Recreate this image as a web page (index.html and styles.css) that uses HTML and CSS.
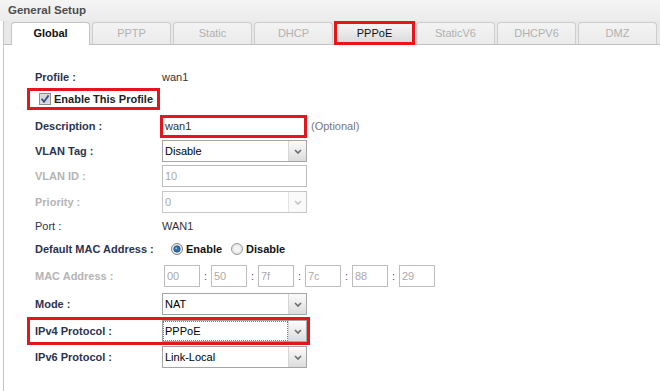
FILE: index.html
```html
<!DOCTYPE html>
<html lang="en">
<head>
  <meta charset="UTF-8">
  <title>General Setup</title>
  <link rel="stylesheet" href="styles.css">
</head>
<body>
  <div class="setup-title">General Setup</div>

  <div class="panel">
    <ul class="tabs">
      <li class="tab active">Global</li>
      <li class="tab">PPTP</li>
      <li class="tab">Static</li>
      <li class="tab">DHCP</li>
      <li class="tab hover marked">PPPoE</li>
      <li class="tab">StaticV6</li>
      <li class="tab">DHCPV6</li>
      <li class="tab">DMZ</li>
    </ul>

    <div class="form">
      <div class="row text">
        <span class="label">Profile :</span>
        <span class="value">wan1</span>
      </div>

      <div class="check-box">
        <svg width="12" height="12" viewBox="0 0 12 12">
          <rect x="0.5" y="0.5" width="11" height="11" fill="#e2e2e2" stroke="#8c8c8c"/>
          <rect x="1.5" y="1.5" width="9" height="9" fill="#d4d8de"/>
          <path d="M2.6 5.8 L5 8.8 L9.6 2.4" fill="none" stroke="#3d5282" stroke-width="1.8"/>
        </svg>
        <span>Enable This Profile</span>
      </div>

      <div class="row">
        <span class="label">Description :</span>
        <div class="input marked">wan1</div>
        <span class="optional">(Optional)</span>
      </div>

      <div class="row short">
        <span class="label">VLAN Tag :</span>
        <div class="select">
          <span class="choice">Disable</span>
          <span class="arrow"><svg width="8" height="5" viewBox="0 0 8 5"><path d="M1 1 L4 4 L7 1" fill="none" stroke="#6a6a6a" stroke-width="1.6"/></svg></span>
        </div>
      </div>

      <div class="row">
        <span class="label off">VLAN ID :</span>
        <div class="input off">10</div>
      </div>

      <div class="row">
        <span class="label off">Priority :</span>
        <div class="select off">
          <span class="choice">0</span>
          <span class="arrow"><svg width="8" height="5" viewBox="0 0 8 5"><path d="M1 1 L4 4 L7 1" fill="none" stroke="#c4c4c4" stroke-width="1.6"/></svg></span>
        </div>
      </div>

      <div class="row text">
        <span class="label plain">Port :</span>
        <span class="value">WAN1</span>
      </div>

      <div class="row short">
        <span class="label">Default MAC Address :</span>
        <div class="radios">
          <svg class="radio" width="12" height="12" viewBox="0 0 12 12">
            <circle cx="6" cy="6" r="5.5" fill="#ececec" stroke="#7f7f7f"/>
            <circle cx="6" cy="6" r="3.2" fill="#2d6fae" stroke="#1c4c7c" stroke-width="0.8"/>
            <circle cx="5.2" cy="5.2" r="1" fill="#9cc6ec"/>
          </svg>
          <span class="radio-text">Enable</span>
          <svg class="radio" width="12" height="12" viewBox="0 0 12 12">
            <circle cx="6" cy="6" r="5.5" fill="#e6e6e6" stroke="#9a9a9a"/>
            <circle cx="6" cy="6" r="3.5" fill="#f4f4f4"/>
          </svg>
          <span class="radio-text">Disable</span>
        </div>
      </div>

      <div class="row mac">
        <span class="label off">MAC Address :</span>
        <div class="mac-fields">
          <div class="input off">00</div><span class="colon">:</span>
          <div class="input off">50</div><span class="colon">:</span>
          <div class="input off">7f</div><span class="colon">:</span>
          <div class="input off">7c</div><span class="colon">:</span>
          <div class="input off">88</div><span class="colon">:</span>
          <div class="input off">29</div>
        </div>
      </div>

      <div class="row">
        <span class="label">Mode :</span>
        <div class="select">
          <span class="choice">NAT</span>
          <span class="arrow"><svg width="8" height="5" viewBox="0 0 8 5"><path d="M1 1 L4 4 L7 1" fill="none" stroke="#6a6a6a" stroke-width="1.6"/></svg></span>
        </div>
      </div>

      <div class="row marked">
        <span class="label">IPv4 Protocol :</span>
        <div class="select focus">
          <span class="choice">PPPoE</span>
          <span class="arrow"><svg width="8" height="5" viewBox="0 0 8 5"><path d="M1 1 L4 4 L7 1" fill="none" stroke="#6a6a6a" stroke-width="1.6"/></svg></span>
        </div>
      </div>

      <div class="row short">
        <span class="label">IPv6 Protocol :</span>
        <div class="select">
          <span class="choice">Link-Local</span>
          <span class="arrow"><svg width="8" height="5" viewBox="0 0 8 5"><path d="M1 1 L4 4 L7 1" fill="none" stroke="#6a6a6a" stroke-width="1.6"/></svg></span>
        </div>
      </div>
    </div>
  </div>
</body>
</html>
```

FILE: styles.css
```css
* {
  box-sizing: border-box;
}

body {
  margin: 0;
  font-family: "Liberation Sans", Arial, sans-serif;
  font-size: 11px;
  color: #333;
  background: #fff;
}

.setup-title {
  height: 21px;
  padding-left: 8px;
  line-height: 21px;
  font-size: 11.5px;
  font-weight: bold;
  color: #4d4d4d;
  background: linear-gradient(#f5f5f5, #ebebeb);
}

.panel {
  margin-left: 3px;
  border-left: 1px solid #c4c4c4;
  min-height: calc(100vh - 21px);
}

/* tab strip */
.tabs {
  display: flex;
  align-items: flex-end;
  gap: 2px;
  height: 24px;
  margin: 0;
  padding: 1px 0 0 7px;
  list-style: none;
  background: #e8e8e8;
  border-bottom: 1px solid #c2c2c2;
}

.tab {
  width: 79px;
  height: 22px;
  line-height: 21px;
  text-align: center;
  color: #b0b0b0;
  background: linear-gradient(#f3f3f3, #ebebeb);
  border: 1px solid #cdcdcd;
  border-bottom: none;
  border-radius: 4px 4px 0 0;
}

.tab.active {
  height: 23px;
  margin-bottom: -1px;
  color: #111;
  font-weight: bold;
  background: #fff;
  border-color: #c4c4c4;
}

.tab.hover {
  color: #111;
  background: linear-gradient(#f8f8f8, #d8d8d8);
}

.tab.marked {
  border-radius: 0;
  outline: 3px solid #e8141c;
  outline-offset: -2px;
}

/* form rows */
.form {
  padding: 21px 0 0 31px;
}

.row {
  display: flex;
  align-items: center;
  height: 26px;
}

.row.text {
  height: 22px;
}

.row.short {
  height: 24px;
}

.row.mac {
  height: 30px;
}

.row.marked {
  width: 283px;
  height: 28px;
  margin-left: -8px;
  padding-left: 5px;
  border: 3px solid #e8141c;
}

.label {
  width: 127px;
  flex-shrink: 0;
  font-weight: bold;
  color: #2c3350;
}

.label.off {
  color: #b4b4b4;
}

.label.plain {
  font-weight: normal;
}

.value {
  color: #333;
}

.check-box {
  display: flex;
  align-items: center;
  gap: 3px;
  width: 133px;
  height: 22px;
  margin: 0 0 3px -8px;
  padding-left: 9px;
  border: 3px solid #e8141c;
  font-weight: bold;
  color: #222;
}

.input {
  width: 145px;
  height: 22px;
  padding-left: 2px;
  line-height: 20px;
  color: #333;
  background: #fff;
  border: 1px solid #a9a9a9;
}

.input.off {
  color: #aaa;
  border-color: #bdbdbd;
}

.input.marked {
  width: 147px;
  height: 23px;
  margin-left: -2px;
  line-height: 17px;
  border: 3px solid #e8141c;
}

.optional {
  margin-left: 4px;
  color: #777;
}

.select {
  display: flex;
  width: 145px;
  height: 22px;
  background: #fff;
  border: 1px solid #a5a5a5;
  color: #000;
}

.select .choice {
  flex: 1;
  padding-left: 2px;
  line-height: 20px;
}

.select .arrow {
  display: flex;
  align-items: center;
  justify-content: center;
  width: 18px;
  border-left: 1px solid #d6d6d6;
  background: linear-gradient(#fbfbfb, #dcdcdc);
}

.select.off {
  border-color: #c6c6c6;
}

.select.off .choice {
  color: #aaa;
}

.select.off .arrow {
  background: #fafafa;
  border-left-color: #e4e4e4;
}

.select.focus .choice {
  outline: 1px dotted #7a7a7a;
  outline-offset: -1px;
}

.radios {
  display: flex;
  align-items: center;
  font-weight: bold;
  color: #111;
}

.radio {
  margin-left: 9px;
}

.radio-text {
  margin-left: 3px;
}

.mac-fields {
  display: flex;
  align-items: center;
  margin-left: 2px;
}

.mac-fields .input {
  width: 36px;
}

.colon {
  width: 11px;
  text-align: center;
  color: #6b3a7d;
}
```
